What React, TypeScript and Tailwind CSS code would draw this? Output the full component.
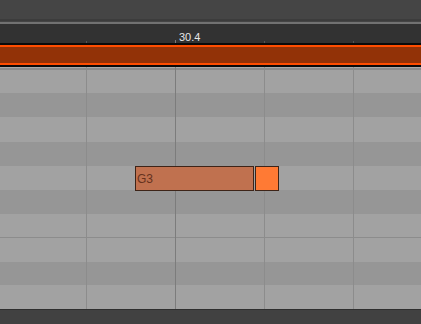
import React from "react"

// piano roll rows from top (B3) down to D3, [height, dark?]
const rows: { key: string; h: string; dark: boolean; sep?: boolean }[] = [
  { key: "B3", h: "h-[23px]", dark: false },
  { key: "A#3", h: "h-[24px]", dark: true },
  { key: "A3", h: "h-[25px]", dark: false },
  { key: "G#3", h: "h-[24px]", dark: true },
  { key: "G3", h: "h-[24px]", dark: false },
  { key: "F#3", h: "h-[24px]", dark: true },
  { key: "F3", h: "h-[23px]", dark: false, sep: true },
  { key: "E3", h: "h-[24px]", dark: false },
  { key: "D#3", h: "h-[23px]", dark: true },
  { key: "D3", h: "h-[24px]", dark: false },
]

const gridLines = [
  { left: "left-[86px]", beat: false },
  { left: "left-[175px]", beat: true },
  { left: "left-[264px]", beat: false },
  { left: "left-[353px]", beat: false },
]

export default function App() {
  return (
    <div className="w-[421px] h-[324px] overflow-hidden bg-[#444444] flex flex-col font-['Liberation_Sans',Arial,sans-serif] select-none">
      {/* top toolbar strip */}
      <div className="h-[19px] bg-[#454545]" />
      <div className="h-[2px] bg-[#3c3c3c]" />
      <div className="h-[1px] bg-[#454545]" />
      <div className="h-[2px] bg-[#727272]" />

      {/* time ruler */}
      <div className="relative h-[19px] bg-[#323232]">
        <span className="absolute left-[179px] top-[7px] text-[11px] leading-[13px] text-[#e6e6e6]">30.4</span>
        <div className="absolute left-[175px] bottom-0 w-px h-[3px] bg-[#7a7a7a]" />
        <div className="absolute left-[86px] bottom-0 w-px h-[2px] bg-[#555555]" />
        <div className="absolute left-[264px] bottom-0 w-px h-[2px] bg-[#555555]" />
        <div className="absolute left-[353px] bottom-0 w-px h-[2px] bg-[#555555]" />
      </div>

      {/* loop / clip bar */}
      <div className="h-[2px] bg-[#0a0a0a]" />
      <div className="h-[2px] bg-[#ff4d00]" />
      <div className="h-[16px] bg-[#923207]" />
      <div className="h-[2px] bg-[#ff4d00]" />
      <div className="h-[2px] bg-[#0a0a0a]" />

      {/* note grid */}
      <div className="relative flex flex-col">
        <div className="h-[1px] bg-[#a9a9a9]" />
        <div className="h-[2px] bg-[#8b8b8b]" />
        {rows.map((r) => (
          <React.Fragment key={r.key}>
            <div className={`${r.h} ${r.dark ? "bg-[#969696]" : "bg-[#a2a2a2]"}`} />
            {r.sep && <div className="h-[1px] bg-[#8c8c8c]" />}
          </React.Fragment>
        ))}

        {gridLines.map((g) => (
          <div
            key={g.left}
            className={`absolute top-0 bottom-0 w-px ${g.left} ${g.beat ? "bg-[#7c7c7c]" : "bg-[#8c8c8c]"}`}
          />
        ))}

        {/* notes */}
        <div className="absolute left-[135px] top-[99px] w-[119px] h-[25px] bg-[#c0714f] border border-[#3d2418] flex items-center pl-[1px]">
          <span className="text-[12px] leading-none text-[#66321e]">G3</span>
        </div>
        <div className="absolute left-[255px] top-[99px] w-[24px] h-[25px] bg-[#ff7a34] border border-[#3d2418]" />
      </div>

      {/* bottom bar */}
      <div className="h-[1px] bg-[#2f2f2f]" />
      <div className="flex-1 bg-[#414141]" />
    </div>
  )
}
